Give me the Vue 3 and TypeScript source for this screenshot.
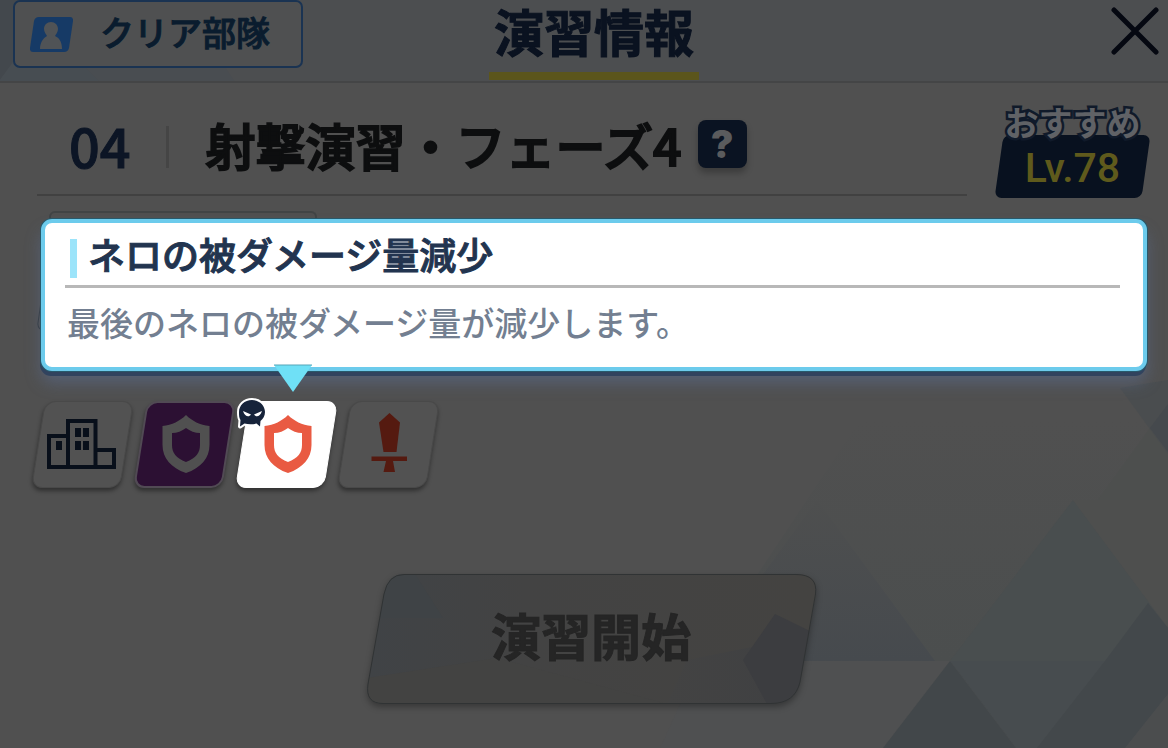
<script setup lang="ts">
import { ref } from 'vue'

type IconName = 'city' | 'shield' | 'sword'

interface Effect {
  id: number
  icon: IconName
  label: string
  tone: 'plain' | 'purple' | 'lit' | 'red'
  enemy?: boolean
}

const effects: Effect[] = [
  { id: 1, icon: 'city', label: '市街地', tone: 'plain' },
  { id: 2, icon: 'shield', label: '防御', tone: 'purple' },
  { id: 3, icon: 'shield', label: 'ネロの被ダメージ量減少', tone: 'lit', enemy: true },
  { id: 4, icon: 'sword', label: '攻撃', tone: 'red' },
]

const selected = ref(3)
</script>

<template>
  <div class="page">
    <svg class="backdrop" viewBox="0 0 1168 748" preserveAspectRatio="xMaxYMax slice" aria-hidden="true">
      <defs>
        <linearGradient id="fadeA" x1="0" y1="0" x2="0" y2="1">
          <stop offset="0" stop-color="#4e4f4f" />
          <stop offset="1" stop-color="#464a4e" />
        </linearGradient>
        <linearGradient id="fadeB" x1="0" y1="0" x2="0" y2="1">
          <stop offset="0" stop-color="#505050" />
          <stop offset="1" stop-color="#4b4e4e" />
        </linearGradient>
      </defs>
      <polygon points="700,661 860,420 1168,420 1168,661" fill="url(#fadeB)" />
      <polygon points="817,500 935,661 700,661" fill="url(#fadeA)" />
      <polygon points="1073,500 1168,628 1168,661 950,661" fill="#494e4f" />
      <polygon points="1073,500 1168,500 1168,628" fill="#4e4f4e" />
      <polygon points="700,661 950,661 883,748 660,748" fill="#4f5051" />
      <polygon points="950,661 1168,661 1168,748 1016,748" fill="#474c4f" />
      <polygon points="950,661 1016,748 883,748" fill="#42474a" />
      <polygon points="1148,603 1168,628 1168,694 1125,748 1037,748 1105,661" fill="#43484b" />
      <polygon points="1168,694 1168,748 1125,748" fill="#4b4d4e" />
      <polygon points="1098,500 1150,428 1168,454 1168,500" fill="#4d4f4e" />
      <polygon points="1120,388 1168,380 1168,454" fill="#4a4d4f" />
      <polygon points="1150,428 1168,404 1168,452" fill="#45494d" />
    </svg>

    <header class="top">
      <svg class="top-facets" viewBox="0 0 300 82" preserveAspectRatio="xMinYMin slice" aria-hidden="true">
        <polygon points="0,0 60,0 0,80" fill="#43484d" />
        <polygon points="0,80 20,52 70,52 100,82 0,82" fill="#474d52" />
        <polygon points="70,52 215,52 235,82 100,82" fill="#494d51" />
      </svg>
      <button type="button" class="clear-team">
        <svg class="team-icon" viewBox="0 0 43 35" aria-hidden="true">
          <path d="M9 0H40Q43.500 0 43 4L39 31Q38 35 34 35H3Q-.5 35 0 31L4 4Q5 0 9 0Z" fill="#163a66" />
          <path d="M21 5C25 5 28 8 28 12C28 15 26 17 25 19C30 21 32 26 32 32H10C10 26 13 21 17 19C16 17 14 15 14 12C14 8 17 5 21 5Z" fill="#505356" />
        </svg>
        <span>クリア部隊</span>
      </button>
      <h1 class="title">演習情報</h1>
      <button type="button" class="close" aria-label="閉じる">
        <svg viewBox="0 0 48 48" aria-hidden="true">
          <path d="M3 3L45 45M45 3L3 45" fill="none" stroke="#050811" stroke-width="5" stroke-linecap="round" />
        </svg>
      </button>
    </header>

    <main class="body">
      <section class="mission">
        <div class="mission-head">
          <span class="number">04</span>
          <h2 class="mission-name">射撃演習・フェーズ4</h2>
          <button type="button" class="help">?</button>
        </div>
        <div class="level">
          <span class="level-label">おすすめ</span>
          <span class="level-value">Lv.78</span>
        </div>
      </section>

      <section class="intel">
        <div class="intel-tab"></div>
        <div class="intel-side"></div>
      </section>

      <section class="effects">
        <div class="popover" role="tooltip">
          <h3>ネロの被ダメージ量減少</h3>
          <p>最後のネロの被ダメージ量が減少します。</p>
          <svg class="arrow" viewBox="0 0 40 29" aria-hidden="true">
            <path d="M1 1H39L20 28Z" fill="#6fe0f6" />
            <path d="M1 1H39" stroke="#55a5b8" stroke-width="1" />
          </svg>
        </div>
        <button
          v-for="e in effects"
          :key="e.id"
          type="button"
          class="tile"
          :class="e.tone"
          :aria-label="e.label"
          :aria-pressed="selected === e.id"
          @click="selected = e.id"
        >
          <svg viewBox="0 0 87 87" aria-hidden="true">
            <g v-if="e.icon === 'city'">
              <path d="M29 66V20H56.500V66M29 35H10V66H75V49H58" fill="none" stroke="#080f1a" stroke-width="4" />
              <path d="M36 27h6v9h-6zM44 27h6v9h-6zM36 40h6v9h-6zM44 40h6v9h-6zM17 40h6v9h-6z" fill="#080f1a" />
            </g>
            <path
              v-else-if="e.icon === 'shield'"
              fill="currentColor"
              fill-rule="evenodd"
              d="M45 14C39 20 31 24 21.500 25V44C21.500 57 30 67 45 72C60 67 68.500 57 68.500 44V25C59 24 51 20 45 14ZM45 27C41 30 36 32 31 32V44C31 52 35 57 45 61C55 57 59 52 59 44V32C54 32 49 30 45 27Z"
            />
            <g v-else fill="#551a10">
              <path d="M44.500 12L55 21.500L51.500 51H38.500L34 21.500Z" />
              <path d="M26.500 55.500H62V60H48L50 71H38.500L41 60H26.500Z" />
            </g>
          </svg>
          <svg v-if="e.enemy" class="ghost" viewBox="0 0 30 32" aria-hidden="true">
            <path
              d="M16 2C23.500 2 29 7.500 29 14C29 18 27 21 24.500 23L24 28.500L20.500 25.500C17 26.500 12 26.500 8.500 25.500L4 28.500L4.500 22C3 20 3 17 3 14C3 7.500 8.500 2 16 2Z"
              fill="#16233a"
              stroke="#fff"
              stroke-width="4"
              stroke-linejoin="round"
              paint-order="stroke"
            />
            <path d="M7 13L15 16.500C13 19.500 9 19 7 13ZM26 13L18 16.500C20 19.500 24 19 26 13Z" fill="#fff" />
          </svg>
        </button>
      </section>

      <button type="button" class="start" disabled>
        <svg class="start-facets" viewBox="0 0 449 130" preserveAspectRatio="none" aria-hidden="true">
          <defs>
            <clipPath id="startShape">
              <path d="M37 0H429Q452 0 449 20L433 108Q428 130 404 130H16Q-2 130 1 110L17 20Q21 0 37 0Z" />
            </clipPath>
            <linearGradient id="startFill" x1="0" y1="0" x2="1" y2="0">
              <stop offset="0" stop-color="#404346" />
              <stop offset="0.35" stop-color="#434343" />
              <stop offset="1" stop-color="#444341" />
            </linearGradient>
            <linearGradient id="startShade" x1="0" y1="0" x2="1" y2="0">
              <stop offset="0" stop-color="#434343" />
              <stop offset="1" stop-color="#3f4042" />
            </linearGradient>
          </defs>
          <g clip-path="url(#startShape)">
            <rect width="449" height="130" fill="url(#startFill)" />
            <polygon points="0,0 48,0 76,44 0,44" fill="#3f4346" />
            <polygon points="0,104 130,84 300,130 0,130" fill="#434342" />
            <polygon points="300,130 320,86 449,60 449,130" fill="url(#startShade)" />
            <polygon points="376,86 408,40 449,60 449,130 400,130" fill="#3c3d40" />
          </g>
          <path d="M37 .5H429Q451 .5 448.500 20L433 108Q428 129.500 404 129.500H16Q-2 129.500 1 110L17 20Q21 .5 37 .5Z" fill="none" stroke="#303334" />
        </svg>
        <span>演習開始</span>
      </button>
    </main>
  </div>
</template>

<style>
html,
body {
  background: #505050;
}
</style>

<style scoped>
.page {
  position: relative;
  min-height: 100vh;
  overflow: hidden;
  background: #505050;
  font-family: "Noto Sans CJK JP", "Noto Sans", sans-serif;
}
.page * {
  box-sizing: border-box;
}
button {
  margin: 0;
  padding: 0;
  border: 0;
  background: none;
  color: inherit;
  font: inherit;
  cursor: pointer;
}
h1,
h2,
h3,
p {
  margin: 0;
}
svg {
  display: block;
}
.title,
.clear-team,
.level-label,
.popover,
.start {
  font-family: "Liberation Sans", "Noto Sans CJK JP", sans-serif;
}
.backdrop {
  position: absolute;
  inset: 0;
  width: 100%;
  height: 100%;
}
.top {
  position: relative;
  display: grid;
  grid-template-columns: 1fr auto 1fr;
  align-items: start;
  height: 83px;
  padding: 0 9px 0 13px;
  border-bottom: 2px solid #444546;
  background: #4c4e50;
}
.top-facets {
  position: absolute;
  left: 0;
  top: 0;
  width: 300px;
  height: 81px;
}
.clear-team {
  position: relative;
  display: flex;
  align-items: center;
  justify-self: start;
  gap: 27px;
  height: 68px;
  padding: 0 31px 0 15px;
  border: 2px solid #1a3352;
  border-radius: 7px;
  background: #4f5051;
  color: #0a1c2e;
  font-size: 34px;
  font-weight: 500;
  line-height: 64px;
  -webkit-text-stroke: 1px #0a1c2e;
}
.team-icon {
  width: 43px;
  height: 35px;
}
.title {
  position: relative;
  height: 80px;
  margin-left: 16px;
  padding: 0 5px;
  border-bottom: 8px solid #5b551c;
  color: #0a1220;
  font-size: 50px;
  font-weight: 700;
  line-height: 70px;
  -webkit-text-stroke: 1px #0a1220;
}
.close {
  justify-self: end;
  margin-top: 7px;
}
.close svg {
  width: 48px;
  height: 48px;
}
.body {
  position: relative;
  display: flex;
  flex-direction: column;
  padding: 0 18px 40px 37px;
}
.mission {
  display: flex;
  gap: 28px;
  height: 115px;
}
.mission-head {
  display: flex;
  flex: 1;
  align-items: center;
  height: 113px;
  padding: 16px 0 0 32px;
  border-bottom: 2px solid #414141;
}
.number {
  height: 42px;
  padding-right: 35px;
  border-right: 3px solid #454545;
  color: #0c1525;
  font-size: 54px;
  font-weight: 500;
  line-height: 38px;
  -webkit-text-stroke: 1px #0c1525;
}
.mission-name {
  padding: 0 16px 6px 37px;
  color: #0d0e0f;
  font-size: 50px;
  font-weight: 500;
  line-height: 60px;
  -webkit-text-stroke: 2px #0d0e0f;
}
.help {
  width: 49px;
  height: 48px;
  margin-bottom: 6px;
  border-radius: 8px;
  background: #0a1322;
  box-shadow: 0 5px 6px rgba(0, 0, 0, 0.25);
  color: #5a5b5d;
  font-family: Inter, "Noto Sans", sans-serif;
  font-size: 38px;
  font-weight: 900;
  line-height: 48px;
}
.level {
  position: relative;
  display: flex;
  flex-direction: column;
  align-items: center;
  width: 155px;
  padding-top: 21px;
}
.level::before {
  content: "";
  position: absolute;
  inset: 52px 4px 0 4px;
  border-radius: 7px;
  background: #08111f;
  transform: skewX(-8deg);
}
.level-label {
  position: relative;
  color: #606266;
  font-size: 34px;
  font-weight: 700;
  line-height: 40px;
  -webkit-text-stroke: 5px #101a2a;
  paint-order: stroke fill;
}
.level-value {
  position: relative;
  color: #5f5a1c;
  font-family: Roboto, "Noto Sans", sans-serif;
  font-size: 41px;
  font-weight: 500;
  line-height: 48px;
}
.intel {
  height: 186px;
  margin-top: 13px;
  margin-bottom: 4px;
  position: relative;
}
.intel-tab {
  width: 268px;
  height: 40px;
  margin-left: 12px;
  border: 2px solid #414445;
  border-bottom: 0;
  border-radius: 6px 6px 0 0;
}
.intel-side {
  width: 1100px;
  max-width: 100%;
  height: 80px;
  margin-left: 5px;
  border: 1px solid #33383b;
  border-radius: 8px;
  transform: skewX(-8deg);
}
.effects {
  position: relative;
  display: flex;
  gap: 15px;
  padding-left: 2px;
}
.popover {
  position: absolute;
  left: 4px;
  right: 3px;
  bottom: calc(100% + 30px);
  padding: 12px 23px 20px 20px;
  border: 4px solid #6ccbec;
  border-radius: 11px;
  background: #fff;
  box-shadow:
    0 0 0 1px #28596b,
    -1px 5px 0 0 #31435e,
    0 12px 16px 0 rgba(95, 120, 170, 0.4);
}
.popover h3 {
  display: flex;
  align-items: center;
  gap: 11px;
  padding: 0 5px 4px;
  border-bottom: 3px solid #b8b8b8;
  color: #22344f;
  font-size: 37px;
  font-weight: 500;
  line-height: 46px;
  -webkit-text-stroke: 1px #22344f;
}
.popover h3::before {
  content: "";
  width: 7px;
  height: 39px;
  background: #9ce4fa;
}
.popover p {
  padding: 15px 2px 0;
  color: #737f91;
  font-size: 33px;
  font-weight: 500;
  line-height: 44px;
}
.arrow {
  position: absolute;
  left: 228px;
  top: calc(100% - 3px);
  width: 40px;
  height: 29px;
}
.tile {
  position: relative;
  width: 87px;
  height: 87px;
  color: #505050;
}
.tile::before {
  content: "";
  position: absolute;
  inset: 0 -1px;
  border: 1px solid #494949;
  border-radius: 11px;
  background: #525252;
  box-shadow: 0 3px 4px rgba(0, 0, 0, 0.4);
  transform: skewX(-9deg);
}
.tile.purple::before {
  border: 2px solid #514a54;
  background: #2c1033;
}
.tile.lit {
  color: #e95a42;
}
.tile.lit::before {
  border-color: #fff;
  background: #fff;
}
.tile svg {
  position: relative;
  width: 87px;
  height: 87px;
}
.tile .ghost {
  position: absolute;
  left: -7px;
  top: -3px;
  width: 30px;
  height: 32px;
  overflow: visible;
}
.start {
  position: relative;
  align-self: center;
  width: 449px;
  height: 130px;
  margin-top: 86px;
  margin-right: 5px;
  color: #252525;
  font-size: 50px;
  font-weight: 700;
  line-height: 130px;
  filter: drop-shadow(0 3px 3px rgba(0, 0, 0, 0.3));
  -webkit-text-stroke: 1px #252525;
}
.start-facets {
  position: absolute;
  inset: 0;
  width: 100%;
  height: 100%;
  overflow: visible;
}
.start span {
  position: relative;
}
</style>
